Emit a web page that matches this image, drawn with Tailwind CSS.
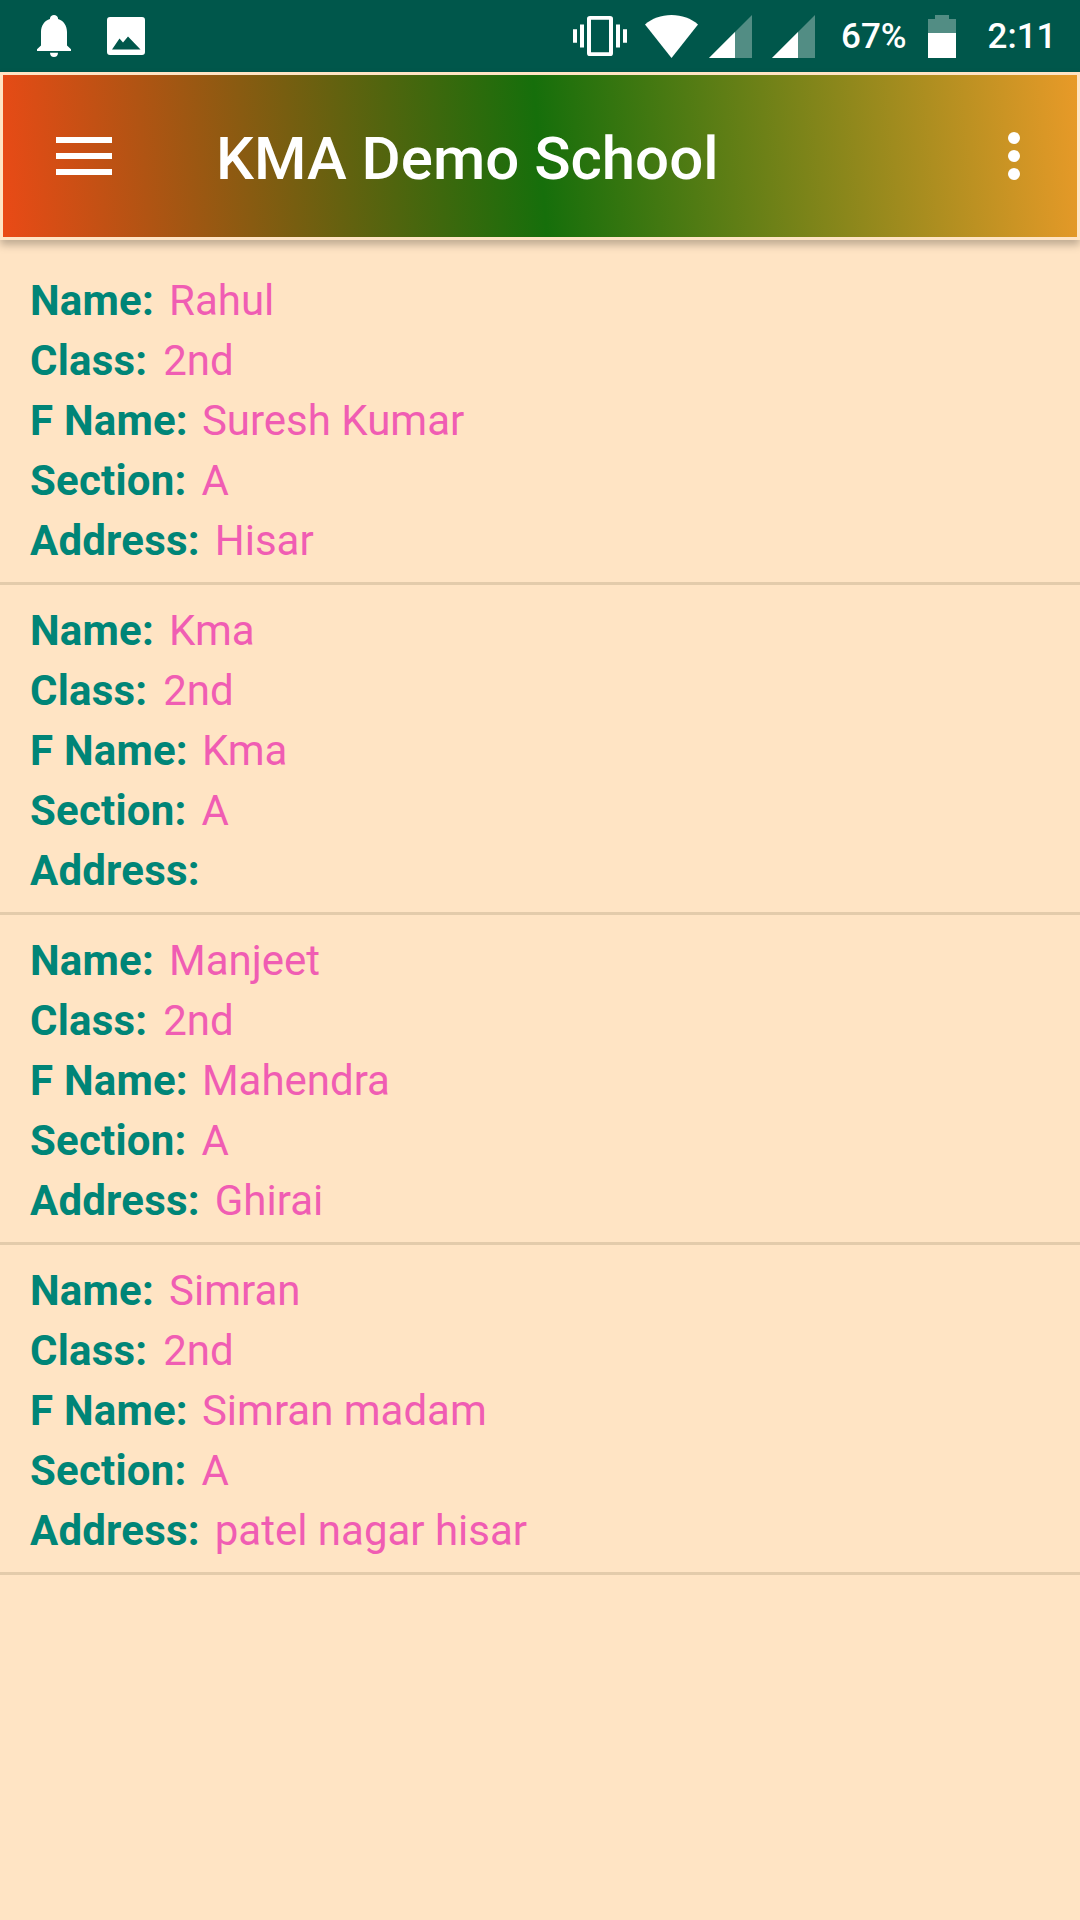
<!DOCTYPE html>
<html lang="en">

<head>
    <meta charset="UTF-8">
    <title>KMA Demo School</title>
    <script src="https://cdn.jsdelivr.net/npm/@tailwindcss/browser@4"></script>
</head>

<body class="bg-[#ffe4c4] font-['Roboto',sans-serif]">
    <div class="w-[1080px] h-[1920px] overflow-hidden flex flex-col">
        <!-- status bar -->
        <div class="h-[72px] bg-[#00574b] flex items-center text-white shrink-0">
            <svg class="ml-[34px] w-[40px] h-[42px]" viewBox="0 1 40 42" fill="#fff"><path d="M20 43c-2.500 0-4-1.500-4-4.300h8c0 2.800-1.500 4.300-4 4.300zM3 37v-1.800l4-3.700V18c0-6.500 3.500-11.500 9-13v-.5C16 2.500 18 1 20 1s4 1.500 4 3.500V5c5.500 1.500 9 6.500 9 13v13.500l4 3.700V37z"/></svg>
            <svg class="ml-[33px] w-[38px] h-[38px]" viewBox="0 0 38 38"><path fill="#fff" fill-rule="evenodd" d="M3 0h32a3 3 0 0 1 3 3v32a3 3 0 0 1-3 3H3a3 3 0 0 1-3-3V3a3 3 0 0 1 3-3zM5 32.500h28.500L21 19.500l-5 6-3.500-4z"/></svg>
            <svg class="ml-[428px] w-[54px] h-[40px]" viewBox="0 0 54 42" preserveAspectRatio="none" fill="#fff"><path d="M0 14h4v14H0zM7 9h4v24H7zM43 9h4v24h-4zM50 14h4v14h-4z"/><path fill-rule="evenodd" d="M17 0h20a3 3 0 0 1 3 3v36a3 3 0 0 1-3 3H17a3 3 0 0 1-3-3V3a3 3 0 0 1 3-3zm1 4v34h18V4z"/></svg>
            <svg class="ml-[18px] w-[53px] h-[43px]" viewBox="0 0 53 43" fill="#fff"><path d="M26.500 43L0 9.500C7 3.500 16 0 26.500 0S46 3.500 53 9.500z"/></svg>
            <svg class="ml-[11px] w-[43px] h-[43px]" viewBox="0 0 43 43"><path fill="#fff" fill-opacity=".32" d="M43 0v43H0z"/><path fill="#fff" d="M26 17v26H0z"/></svg>
            <svg class="ml-[20px] w-[43px] h-[43px]" viewBox="0 0 43 43"><path fill="#fff" fill-opacity=".32" d="M43 0v43H0z"/><path fill="#fff" d="M26 17v26H0z"/></svg>
            <span class="ml-[26px] text-[35px] font-medium leading-none">67%</span>
            <svg class="ml-[21px] w-[28px] h-[43px]" viewBox="0 0 28 43"><path fill="#fff" fill-opacity=".32" d="M7 0h14v4h7v39H0V4h7z"/><path fill="#fff" d="M0 18h28v25H0z"/></svg>
            <span class="ml-[32px] text-[35px] font-medium leading-none">2:11</span>
        </div>
        <!-- toolbar -->
        <div class="h-[168px] border-[3px] border-[#ffe4c4] bg-[linear-gradient(85deg,#ea4a16,#166f0b,#e89a28)] shadow-[0_5px_8px_rgba(0,0,0,0.25)] flex items-center shrink-0 relative">
            <div class="ml-[53px] w-[56px] flex flex-col gap-[10px]">
                <div class="h-[6px] bg-white"></div>
                <div class="h-[6px] bg-white"></div>
                <div class="h-[6px] bg-white"></div>
            </div>
            <p class="ml-[104px] mt-[5px] text-[60px] font-medium text-white leading-none">KMA Demo School</p>
            <div class="ml-auto mr-[57px] flex flex-col gap-[6px]">
                <div class="w-[12px] h-[12px] rounded-full bg-white"></div>
                <div class="w-[12px] h-[12px] rounded-full bg-white"></div>
                <div class="w-[12px] h-[12px] rounded-full bg-white"></div>
            </div>
        </div>
        <!-- student list -->
        <div class="pt-[15px] text-[42px] leading-[60px]">
            <div class="px-[30px] pt-[16px] pb-[11px] border-b-[3px] border-[#e3cbab]">
                <p><span class="font-bold tracking-[0.2px] text-[#008577]">Name:</span><span class="ml-[15px] text-[#f05db3]">Rahul</span></p>
                <p><span class="font-bold tracking-[0.2px] text-[#008577]">Class:</span><span class="ml-[16px] text-[#f05db3]">2nd</span></p>
                <p><span class="font-bold tracking-[0.2px] text-[#008577]">F Name:</span><span class="ml-[14px] text-[#f05db3]">Suresh Kumar</span></p>
                <p><span class="font-bold tracking-[0.2px] text-[#008577]">Section:</span><span class="ml-[15px] text-[#f05db3]">A</span></p>
                <p><span class="font-bold tracking-[0.2px] text-[#008577]">Address:</span><span class="ml-[15px] text-[#f05db3]">Hisar</span></p>
            </div>
            <div class="px-[30px] pt-[16px] pb-[11px] border-b-[3px] border-[#e3cbab]">
                <p><span class="font-bold tracking-[0.2px] text-[#008577]">Name:</span><span class="ml-[15px] text-[#f05db3]">Kma</span></p>
                <p><span class="font-bold tracking-[0.2px] text-[#008577]">Class:</span><span class="ml-[16px] text-[#f05db3]">2nd</span></p>
                <p><span class="font-bold tracking-[0.2px] text-[#008577]">F Name:</span><span class="ml-[14px] text-[#f05db3]">Kma</span></p>
                <p><span class="font-bold tracking-[0.2px] text-[#008577]">Section:</span><span class="ml-[15px] text-[#f05db3]">A</span></p>
                <p><span class="font-bold tracking-[0.2px] text-[#008577]">Address:</span></p>
            </div>
            <div class="px-[30px] pt-[16px] pb-[11px] border-b-[3px] border-[#e3cbab]">
                <p><span class="font-bold tracking-[0.2px] text-[#008577]">Name:</span><span class="ml-[15px] text-[#f05db3]">Manjeet</span></p>
                <p><span class="font-bold tracking-[0.2px] text-[#008577]">Class:</span><span class="ml-[16px] text-[#f05db3]">2nd</span></p>
                <p><span class="font-bold tracking-[0.2px] text-[#008577]">F Name:</span><span class="ml-[14px] text-[#f05db3]">Mahendra</span></p>
                <p><span class="font-bold tracking-[0.2px] text-[#008577]">Section:</span><span class="ml-[15px] text-[#f05db3]">A</span></p>
                <p><span class="font-bold tracking-[0.2px] text-[#008577]">Address:</span><span class="ml-[15px] text-[#f05db3]">Ghirai</span></p>
            </div>
            <div class="px-[30px] pt-[16px] pb-[11px] border-b-[3px] border-[#e3cbab]">
                <p><span class="font-bold tracking-[0.2px] text-[#008577]">Name:</span><span class="ml-[15px] text-[#f05db3]">Simran</span></p>
                <p><span class="font-bold tracking-[0.2px] text-[#008577]">Class:</span><span class="ml-[16px] text-[#f05db3]">2nd</span></p>
                <p><span class="font-bold tracking-[0.2px] text-[#008577]">F Name:</span><span class="ml-[14px] text-[#f05db3]">Simran madam</span></p>
                <p><span class="font-bold tracking-[0.2px] text-[#008577]">Section:</span><span class="ml-[15px] text-[#f05db3]">A</span></p>
                <p><span class="font-bold tracking-[0.2px] text-[#008577]">Address:</span><span class="ml-[15px] text-[#f05db3]">patel nagar hisar</span></p>
            </div>
        </div>
    </div>
</body>

</html>
